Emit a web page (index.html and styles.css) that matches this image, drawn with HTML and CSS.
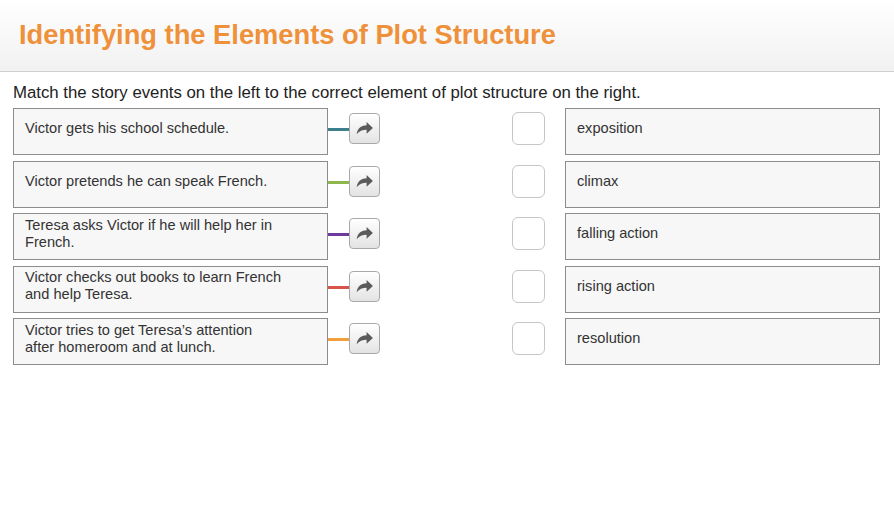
FILE: index.html
```html
<!DOCTYPE html>
<html>
<head>
<meta charset="utf-8">
<link rel="stylesheet" href="styles.css">
</head>
<body>
<header class="header"><h1 class="title">Identifying the Elements of Plot Structure</h1></header>
<main class="main">
  <p class="prompt">Match the story events on the left to the correct element of plot structure on the right.</p>
  <div class="rows">
    <div class="row">
      <div class="card">Victor gets his school schedule.</div>
      <span class="wire teal"></span>
      <span class="btn"><svg viewBox="0 0 20 20" width="21" height="21"><path d="M2.5 15.5 C3.5 9.5 7.5 7 12 7 L12 3.8 L18 9.5 L12 15 L12 11.2 C8 11.2 5 12.3 2.5 15.5 Z"/></svg></span>
      <span class="check"></span>
      <div class="card answer">exposition</div>
    </div>
    <div class="row">
      <div class="card">Victor pretends he can speak French.</div>
      <span class="wire green"></span>
      <span class="btn"><svg viewBox="0 0 20 20" width="21" height="21"><path d="M2.5 15.5 C3.5 9.5 7.5 7 12 7 L12 3.8 L18 9.5 L12 15 L12 11.2 C8 11.2 5 12.3 2.5 15.5 Z"/></svg></span>
      <span class="check"></span>
      <div class="card answer">climax</div>
    </div>
    <div class="row">
      <div class="card">Teresa asks Victor if he will help her in French.</div>
      <span class="wire purple"></span>
      <span class="btn"><svg viewBox="0 0 20 20" width="21" height="21"><path d="M2.5 15.5 C3.5 9.5 7.5 7 12 7 L12 3.8 L18 9.5 L12 15 L12 11.2 C8 11.2 5 12.3 2.5 15.5 Z"/></svg></span>
      <span class="check"></span>
      <div class="card answer">falling action</div>
    </div>
    <div class="row">
      <div class="card">Victor checks out books to learn French and help Teresa.</div>
      <span class="wire red"></span>
      <span class="btn"><svg viewBox="0 0 20 20" width="21" height="21"><path d="M2.5 15.5 C3.5 9.5 7.5 7 12 7 L12 3.8 L18 9.5 L12 15 L12 11.2 C8 11.2 5 12.3 2.5 15.5 Z"/></svg></span>
      <span class="check"></span>
      <div class="card answer">rising action</div>
    </div>
    <div class="row">
      <div class="card">Victor tries to get Teresa’s attention after homeroom and at lunch.</div>
      <span class="wire orange"></span>
      <span class="btn"><svg viewBox="0 0 20 20" width="21" height="21"><path d="M2.5 15.5 C3.5 9.5 7.5 7 12 7 L12 3.8 L18 9.5 L12 15 L12 11.2 C8 11.2 5 12.3 2.5 15.5 Z"/></svg></span>
      <span class="check"></span>
      <div class="card answer">resolution</div>
    </div>
  </div>
</main>
</body>
</html>
```
FILE: styles.css
```css
* { box-sizing: border-box; }
html, body { margin: 0; padding: 0; background: #fff; }
body { font-family: "Liberation Sans", Arial, sans-serif; color: #333; }
.header {
  height: 72px;
  background: linear-gradient(to bottom, #ffffff 0%, #f1f1f1 100%);
  border-bottom: 1px solid #cfcfcf;
  padding: 20px 0 0 19px;
}
.title {
  margin: 0;
  font-size: 27.3px;
  line-height: 30px;
  font-weight: bold;
  color: #ee913a;
}
.main { padding: 0 0 0 13px; }
.prompt {
  margin: 0;
  padding-top: 11px;
  font-size: 16.8px;
  line-height: 20px;
  color: #222;
  height: 36px;
}
.rows { display: flex; flex-direction: column; gap: 5.5px; }
.row { display: flex; align-items: flex-start; height: 47px; }
.card {
  width: 315px;
  height: 47px;
  border: 1px solid #8c8c8c;
  background: #f7f7f7;
  padding: 0 42px 6px 11px;
  font-size: 14.6px;
  line-height: 17px;
  color: #333;
  display: flex;
  align-items: center;
  flex-shrink: 0;
}
.wire { width: 21px; height: 3px; margin-top: 20px; }
.teal { background: #3e7f8e; }
.green { background: #8db74d; }
.purple { background: #6f3a9e; }
.red { background: #d9534a; }
.orange { background: #f2a03f; }
.btn {
  width: 31px;
  height: 31px;
  margin-top: 5px;
  border: 1px solid #a9a9a9;
  border-radius: 4px;
  background: linear-gradient(to bottom, #ffffff 0%, #e3e3e3 100%);
  display: flex;
  align-items: center;
  justify-content: center;
}
.btn svg { fill: #5b5b5b; }
.check {
  width: 33px;
  height: 33px;
  margin-top: 4px;
  margin-left: 132px;
  border: 1px solid #c6c6c6;
  border-radius: 6px;
  background: #fff;
}
.answer { margin-left: 20px; }
```
